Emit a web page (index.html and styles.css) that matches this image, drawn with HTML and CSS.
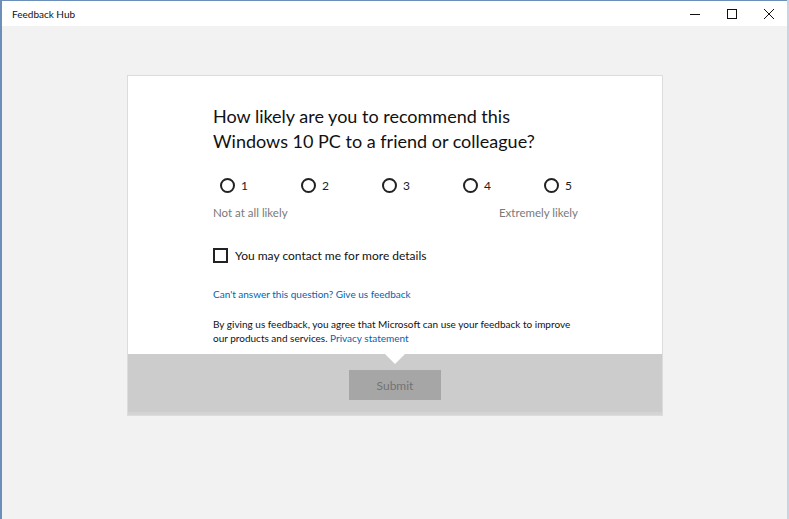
FILE: index.html
```html
<!DOCTYPE html>
<html lang="en">
<head>
    <meta charset="UTF-8">
    <title>Feedback Hub</title>
    <link rel="stylesheet" href="styles.css">
</head>
<body>

    <div class="window">
        <!-- Barra de título -->
        <div class="titlebar">
            <span class="app-title">Feedback Hub</span>
            <div class="controls">
                <span class="ctl">
                    <svg width="10" height="10" viewBox="0 0 10 10"><path d="M0 5.5h10" stroke="#111" stroke-width="1"/></svg>
                </span>
                <span class="ctl">
                    <svg width="10" height="10" viewBox="0 0 10 10"><rect x="0.5" y="0.5" width="9" height="9" fill="none" stroke="#111" stroke-width="1"/></svg>
                </span>
                <span class="ctl">
                    <svg width="10" height="10" viewBox="0 0 10 10"><path d="M0 0L10 10M10 0L0 10" stroke="#111" stroke-width="1"/></svg>
                </span>
            </div>
        </div>

        <!-- Conteúdo -->
        <div class="content">
            <div class="card">
                <div class="card-body">
                    <h2>How likely are you to recommend this Windows 10 PC to a friend or colleague?</h2>

                    <div class="scale">
                        <label class="opt"><span class="radio"></span>1</label>
                        <label class="opt"><span class="radio"></span>2</label>
                        <label class="opt"><span class="radio"></span>3</label>
                        <label class="opt"><span class="radio"></span>4</label>
                        <label class="opt"><span class="radio"></span>5</label>
                    </div>
                    <div class="scale-labels">
                        <span>Not at all likely</span>
                        <span>Extremely likely</span>
                    </div>

                    <label class="contact"><span class="box"></span>You may contact me for more details</label>

                    <a class="link" href="#">Can't answer this question? Give us feedback</a>

                    <p class="legal">By giving us feedback, you agree that Microsoft can use your feedback to improve our products and services. <a href="#">Privacy statement</a></p>
                </div>
                <div class="card-footer">
                    <button class="btn-submit" disabled>Submit</button>
                </div>
            </div>
        </div>
    </div>

</body>
</html>
```

FILE: styles.css
```css
body {
    margin: 0;
    font-family: 'Lato', 'Noto Sans', sans-serif;
    color: #111;
}
.window {
    height: 519px;
    display: flex;
    flex-direction: column;
    background-color: #f2f2f2;
    border-left: 2px solid #6b8fb8;
    border-right: 2px solid #c8d4e4;
    box-sizing: border-box;
}
.titlebar {
    height: 26px;
    background-color: #fff;
    display: flex;
    align-items: center;
    justify-content: space-between;
    border-top: 1px solid #6b8fb8;
    box-sizing: border-box;
}
.app-title {
    font-size: 10px;
    padding-left: 10px;
}
.controls {
    display: flex;
}
.ctl {
    width: 37px;
    height: 25px;
    display: flex;
    align-items: center;
    justify-content: center;
}
.content {
    flex: 1;
    display: flex;
    justify-content: center;
    padding-top: 49px;
    padding-left: 1px;
}
.card {
    width: 536px;
    height: 341px;
    border: 1px solid #dcdcdc;
    box-sizing: border-box;
    background-color: #fff;
    display: flex;
    flex-direction: column;
}
.card-body {
    padding: 28px 85px 0 85px;
    height: 278px;
    box-sizing: border-box;
}
h2 {
    font-size: 18px;
    font-weight: normal;
    line-height: 25px;
    margin: 0 0 21px;
    color: #111;
}
.scale {
    display: flex;
}
.opt {
    flex: none;
    width: 81px;
    display: flex;
    align-items: center;
    font-size: 12px;
    height: 20px;
    color: #222;
}
.opt:last-child {
    width: auto;
}
.radio {
    width: 11px;
    height: 11px;
    border: 2px solid #222;
    border-radius: 50%;
    margin: 0 6px 0 7px;
}
.scale-labels {
    display: flex;
    justify-content: space-between;
    font-size: 11.5px;
    color: #7a7a7a;
    margin-top: 11px;
    width: 365px;
}
.contact {
    display: flex;
    align-items: center;
    font-size: 12px;
    margin-top: 29px;
    color: #111;
}
.box {
    width: 11px;
    height: 11px;
    border: 2px solid #222;
    margin-right: 7px;
}
.link {
    display: block;
    margin-top: 25px;
    font-size: 10px;
    color: #0063b1;
    text-decoration: none;
}
.legal {
    font-size: 10px;
    line-height: 14px;
    margin: 17px 0 0;
    color: #111;
}
.legal a {
    color: #0063b1;
    text-decoration: none;
}
.card-footer {
    flex: 1;
    background-color: #cccccc;
    position: relative;
    display: flex;
    justify-content: center;
    padding-top: 16px;
    box-sizing: border-box;
    border-bottom: 3px solid #d4d4d4;
}
.card-footer::before {
    content: "";
    position: absolute;
    top: 0;
    left: 50%;
    margin-left: -10px;
    border-left: 10px solid transparent;
    border-right: 10px solid transparent;
    border-top: 10px solid #fff;
}
.btn-submit {
    width: 92px;
    height: 30px;
    background-color: #a6a6a6;
    border: none;
    color: #737373;
    font-family: 'Lato', 'Noto Sans', sans-serif;
    font-size: 12px;
}
```
